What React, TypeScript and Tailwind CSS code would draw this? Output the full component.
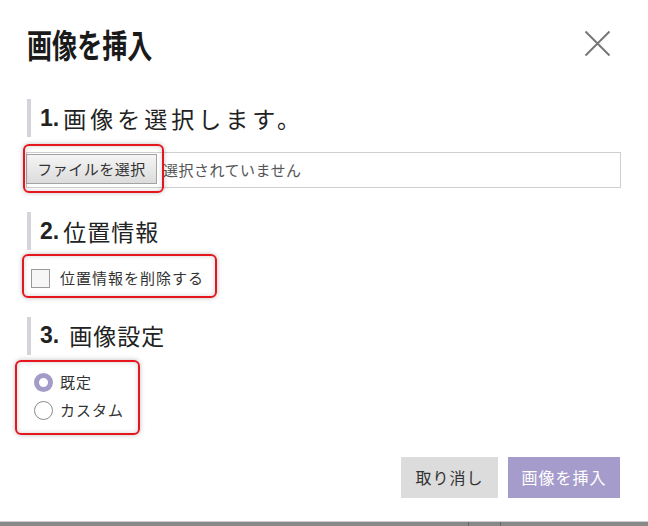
import React from 'react';

const jp = "font-['Noto_Sans_CJK_JP','Noto_Sans',sans-serif]";

const Highlight: React.FC<{ className: string }> = ({ className }) => (
  <div
    className={`absolute rounded-[6px] border-2 border-[#e5161d] shadow-[0_0_5px_rgba(0,0,0,0.25),inset_0_0_5px_rgba(0,0,0,0.18)] pointer-events-none ${className}`}
  />
);

const SectionTitle: React.FC<{ num: string; label: string; gap?: string; track?: string }> = ({ num, label, gap = 'ml-[4px]', track = 'tracking-[1px]' }) => (
  <div className="ml-[27px] flex h-[38px] items-center border-l-4 border-[#d3d5db] pl-[9px] text-[23px] leading-none text-[#222]">
    <span className="font-['Liberation_Sans',sans-serif] font-bold">{num}</span>
    <span className={`${gap} ${track}`}>{label}</span>
  </div>
);

export default function App() {
  return (
    <div className={`relative flex h-[526px] w-[648px] flex-col overflow-hidden bg-white ${jp}`}>
      {/* header */}
      <div className="flex items-start justify-between pl-[27px] pr-[37px] pt-[25px]">
        <h1 className="origin-left scale-x-[0.76] whitespace-nowrap text-[33px] font-bold leading-[38px] text-[#1a1a1a]">画像を挿入</h1>
        <button className="mt-[5px] text-[#777]">
          <svg width="27" height="27" viewBox="0 0 27 27" fill="none" stroke="currentColor" strokeWidth="2">
            <path d="M1.5 1.5 L25.5 25.5 M25.5 1.5 L1.5 25.5" />
          </svg>
        </button>
      </div>

      <div className="mt-[36px]">
        <SectionTitle num="1." label="画像を選択します。" track="tracking-[4px]" />
      </div>

      <div className="relative ml-[26px] mt-[15px] flex h-[36px] w-[595px] items-start border border-[#cfcfcf]">
        <button className="mt-px -ml-px h-[30px] w-[131px] border border-[#a3a3a3] bg-gradient-to-b from-[#f5f5f5] to-[#dcdcdc] text-[15px] tracking-[0.5px] text-[#333]">
          ファイルを選択
        </button>
        <span className="ml-[6px] self-center text-[15px] tracking-[0.5px] text-[#555]">選択されていません</span>
        <Highlight className="-left-[4px] -top-[9px] h-[49px] w-[141px]" />
      </div>

      <div className="mt-[24px]">
        <SectionTitle num="2." label="位置情報" />
      </div>

      <div className="relative ml-[31px] mt-[17px] flex items-center">
        <span className="h-[19px] w-[19px] border border-[#9a9a9a] bg-[#f6f6f6]" />
        <span className="ml-[10px] text-[15px] tracking-[1px] text-[#333]">位置情報を削除する</span>
        <Highlight className="-left-[9px] -top-[13px] h-[44px] w-[195px]" />
      </div>

      <div className="mt-[27px]">
        <SectionTitle num="3." label="画像設定" gap="ml-[10px]" />
      </div>

      <div className="relative ml-[34px] mt-[14px] flex flex-col">
        <label className="flex h-[28px] items-center">
          <span className="h-[19px] w-[19px] rounded-full border-[5px] border-[#a49cc8] bg-white" />
          <span className="ml-[7px] text-[15px] tracking-[1px] text-[#333]">既定</span>
        </label>
        <label className="flex h-[28px] items-center">
          <span className="h-[19px] w-[19px] rounded-full border border-[#8a8a8a] bg-white" />
          <span className="ml-[7px] text-[15px] tracking-[1px] text-[#333]">カスタム</span>
        </label>
        <Highlight className="-left-[19px] -top-[9px] h-[75px] w-[125px]" />
      </div>

      <div className="mt-[32px] flex justify-end gap-[10px] pr-[28px]">
        <button className="h-[41px] w-[97px] bg-[#dcdcdc] text-[16px] tracking-[1px] text-[#333]">取り消し</button>
        <button className="h-[41px] w-[112px] bg-[#a59ccb] text-[16px] tracking-[1px] text-white">画像を挿入</button>
      </div>

      {/* bottom strip */}
      <div className="mt-auto flex h-[5px] flex-col">
        <div className="h-px bg-[#cccccc]" />
        <div className="flex flex-1 bg-[#888888]">
          <div className="w-[468px]" />
          <div className="w-px bg-[#6a6a6a]" />
          <div className="w-[31px]" />
          <div className="w-px bg-[#6a6a6a]" />
        </div>
      </div>
    </div>
  );
}
